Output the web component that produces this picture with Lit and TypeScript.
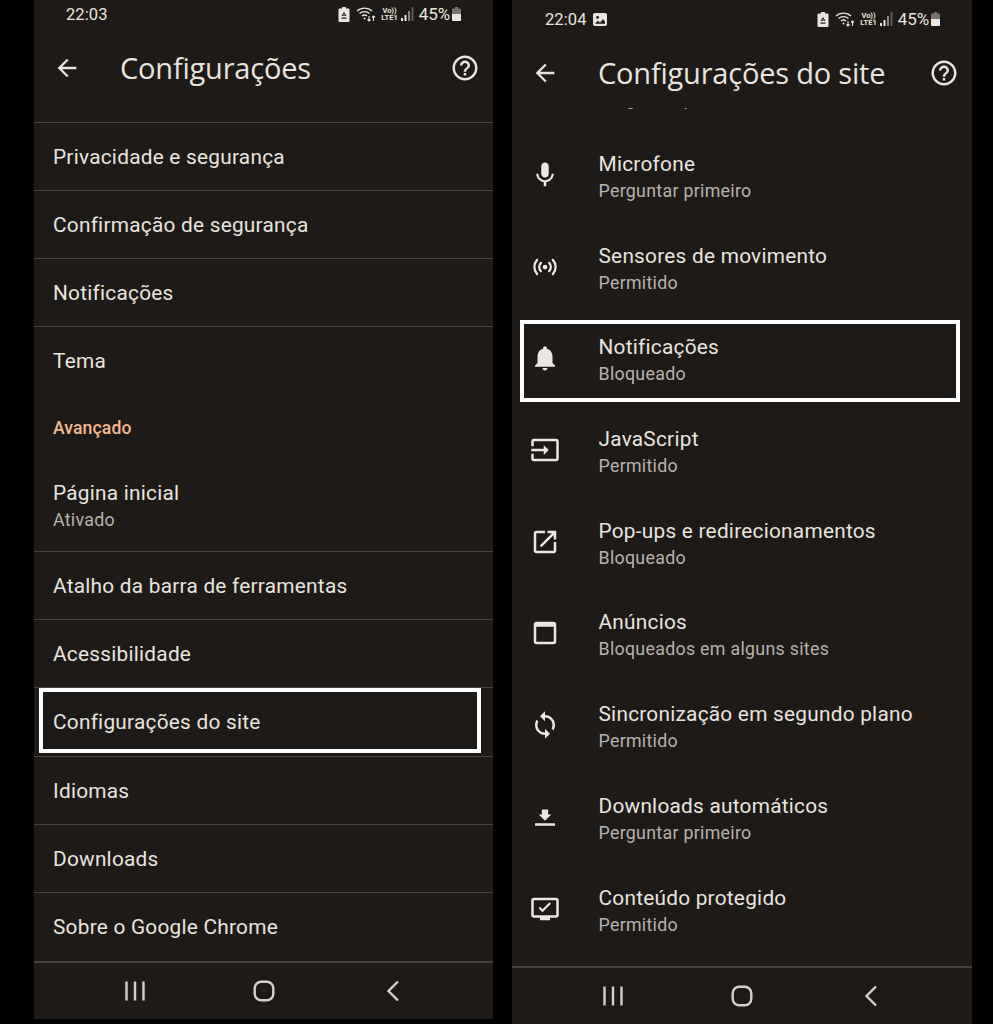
import { LitElement, html, css, svg } from "lit";
import { customElement, property } from "lit/decorators.js";

const ICONS: Record<string, any> = {
  mic: svg`<path d="M12 14c1.66 0 2.99-1.34 2.99-3L15 5c0-1.66-1.34-3-3-3S9 3.34 9 5v6c0 1.66 1.34 3 3 3zm5.3-3c0 3-2.54 5.1-5.3 5.1S6.7 14 6.7 11H5c0 3.41 2.72 6.23 6 6.72V21h2v-3.28c3.28-.48 6-3.3 6-6.72h-1.7z"/>`,
  sensors: svg`<circle cx="12" cy="12" r="1.9"/><path fill="none" stroke="currentColor" stroke-width="1.8" stroke-linecap="round" d="M8.700 8.700a4.700 4.700 0 0 0 0 6.600M15.300 8.700a4.700 4.700 0 0 1 0 6.600M5.700 6.300a8.500 8.500 0 0 0 0 11.400M18.300 6.300a8.500 8.500 0 0 1 0 11.400"/>`,
  bell: svg`<path d="M12 22c1.1 0 2-.9 2-2h-4c0 1.1.89 2 2 2zm6-6v-5c0-3.07-1.64-5.64-4.5-6.32V4c0-.83-.67-1.5-1.5-1.5s-1.5.67-1.5 1.5v.68C7.63 5.36 6 7.92 6 11v5l-2 2v1h16v-1l-2-2z"/>`,
  input: svg`<path d="M21 3.01H3c-1.1 0-2 .9-2 2V9h2V4.99h18v14.03H3V15H1v4.01c0 1.1.9 1.98 2 1.98h18c1.1 0 2-.88 2-1.98v-14c0-1.11-.9-2-2-2zM11 16l4-4-4-4v3H1v2h10v3z"/>`,
  open: svg`<path d="M19 19H5V5h7V3H5c-1.11 0-2 .9-2 2v14c0 1.1.89 2 2 2h14c1.1 0 2-.9 2-2v-7h-2v7zM14 3v2h3.59l-9.83 9.83 1.41 1.41L19 6.41V10h2V3h-7z"/>`,
  web: svg`<path d="M19 3H5c-1.1 0-2 .9-2 2v14c0 1.1.9 2 2 2h14c1.1 0 2-.9 2-2V5c0-1.1-.9-2-2-2zm0 16H5V7h14v12z"/>`,
  sync: svg`<path d="M12 4V1L8 5l4 4V6c3.31 0 6 2.69 6 6 0 1.01-.25 1.97-.7 2.8l1.46 1.46C19.54 15.03 20 13.57 20 12c0-4.42-3.58-8-8-8zm0 14c-3.31 0-6-2.69-6-6 0-1.01.25-1.97.7-2.8L5.24 7.74C4.46 8.97 4 10.43 4 12c0 4.42 3.58 8 8 8v3l4-4-4-4v3z"/>`,
  download: svg`<path d="M9.500 6h5v4H17l-5 5-5-5h2.500zM4 17h16v2H4z"/>`,
  protected: svg`<path d="M21 3H3c-1.1 0-2 .9-2 2v12c0 1.1.9 2 2 2h5v2h8v-2h5c1.1 0 2-.9 2-2V5c0-1.1-.9-2-2-2zm0 14H3V5h18v12z"/><path d="M10 14.600l-3.200-3.200 1.200-1.200 2 2 5.600-5.600 1.200 1.200z"/>`,
};

const BACK = svg`<path d="M20 11H7.83l5.59-5.59L12 4l-8 8 8 8 1.41-1.41L7.83 13H20v-2z"/>`;
const HELP = svg`<path d="M11 18h2v-2h-2v2zm1-16C6.48 2 2 6.48 2 12s4.48 10 10 10 10-4.48 10-10S17.52 2 12 2zm0 18c-4.41 0-8-3.59-8-8s3.59-8 8-8 8 3.59 8 8-3.59 8-8 8zm0-14c-2.21 0-4 1.79-4 4h2c0-1.1.9-2 2-2s2 .9 2 2c0 2-3 1.75-3 5h2c0-2.25 3-2.5 3-5 0-2.21-1.79-4-4-4z"/>`;

@customElement("status-bar")
class StatusBar extends LitElement {
  @property() time = "";
  @property({ type: Boolean }) picture = false;
  static styles = css`
    :host { display: flex; align-items: center; color: #e9e4df; font-family: Roboto, "Liberation Sans", sans-serif; padding: 0 32px; height: 100%; }
    .time { font-size: 16.500px; letter-spacing: 0.1px; }
    .pic { margin-left: 6px; display: block; }
    .right { margin-left: auto; display: flex; align-items: center; }
    .pct { font-size: 17px; margin-left: 5px; letter-spacing: -0.1px; }
    .lte { font-size: 7.500px; line-height: 7.500px; font-weight: 700; text-align: center; margin-left: 5px; }
    svg { display: block; }
  `;
  render() {
    return html`
      <span class="time">${this.time}</span>
      ${this.picture ? html`<svg class="pic" width="14" height="13" viewBox="0 0 14 13"><rect width="14" height="13" rx="2" fill="#e9e4df"/><circle cx="4.500" cy="4.400" r="1.400" fill="#1e1a18"/><path d="M2 10.800l3-3 2 2 3-3.500 2 2.500v2z" fill="#1e1a18"/></svg>` : ""}
      <div class="right">
        <svg width="12" height="16" viewBox="0 0 12 16"><path d="M4 1h4v1.500h2.500a1 1 0 0 1 1 1V15a1 1 0 0 1-1 1h-9a1 1 0 0 1-1-1V3.500a1 1 0 0 1 1-1H4z" fill="#e9e4df"/><path d="M6 6l2.500 4H3.500zM6 8l1 1.600H5z" fill="#1e1a18" fill-rule="evenodd"/><path d="M3.500 11.500h5v1.200h-5z" fill="#1e1a18"/></svg>
        <svg style="margin-left:6px" width="20" height="18" viewBox="0 0 20 18" fill="none" stroke="#e9e4df" stroke-width="1.300"><path d="M1 6a11 11 0 0 1 15 0M3.500 8.500a7.500 7.500 0 0 1 10 0M6 11a4 4 0 0 1 5 0"/><circle cx="8.500" cy="13.500" r="1" fill="#e9e4df" stroke="none"/><path d="M13 11v5M11.500 14.500l1.500 1.500 1.500-1.500M17.500 16v-5M16 12.500l1.500-1.500 1.500 1.500" stroke-width="1.100"/></svg>
        <div class="lte">Vo))<br />LTE1</div>
        <svg style="margin-left:3px" width="13" height="14" viewBox="0 0 13 14"><rect x="0" y="11" width="2" height="3" fill="#e9e4df"/><rect x="3.500" y="8" width="2" height="6" fill="#e9e4df"/><rect x="7" y="4" width="2" height="10" fill="#8a8580"/><rect x="10.500" y="0" width="2" height="14" fill="#5e5a56"/></svg>
        <span class="pct">45%</span>
        <svg style="margin-left:2px" width="9" height="14" viewBox="0 0 9 14"><path d="M3 0h3v1.500h2a1 1 0 0 1 1 1V13a1 1 0 0 1-1 1H1a1 1 0 0 1-1-1V2.500a1 1 0 0 1 1-1h2z" fill="#77726d"/><path d="M0 7h9v6a1 1 0 0 1-1 1H1a1 1 0 0 1-1-1z" fill="#ece7e2"/></svg>
      </div>
    `;
  }
}

@customElement("app-bar")
class AppBar extends LitElement {
  @property() heading = "";
  static styles = css`
    :host { display: flex; align-items: center; padding: 0 13px 0 19px; color: #e9e4df; }
    h1 { margin: 0 0 0 30px; font: 400 29px "Open Sans", Roboto, sans-serif; letter-spacing: -0.2px; flex: 1; white-space: nowrap; position: relative; top: -1px; }
    svg { fill: currentColor; display: block; }
  `;
  render() {
    return html`
      <svg width="28" height="28" viewBox="0 0 24 24" style="margin-right:9px">${BACK}</svg>
      <h1>${this.heading}</h1>
      <svg width="30" height="30" viewBox="0 0 24 24">${HELP}</svg>
    `;
  }
}

@customElement("nav-bar")
class NavBar extends LitElement {
  static styles = css`
    :host { display: flex; justify-content: center; align-items: center; color: #d6d1cc; border-top: 2px solid #46423e; box-sizing: border-box; }
    .slot { width: 129px; display: flex; justify-content: center; }
    svg { display: block; fill: none; stroke: currentColor; stroke-width: 2.400; }
  `;
  render() {
    return html`
      <div class="slot"><svg width="22" height="22" viewBox="0 0 22 22"><path d="M2.500 1.500v19M11 1.500v19M19.500 1.500v19" /></svg></div>
      <div class="slot"><svg width="22" height="22" viewBox="0 0 22 22"><rect x="1.700" y="1.700" width="18.600" height="18.600" rx="6.500" /></svg></div>
      <div class="slot"><svg width="22" height="22" viewBox="0 0 22 22"><path d="M16 1.500L6.500 11l9.500 9.500" /></svg></div>
    `;
  }
}

const LEFT_ROWS: { t: string; s?: string; section?: boolean; hl?: boolean }[] = [
  { t: "Privacidade e segurança" },
  { t: "Confirmação de segurança" },
  { t: "Notificações" },
  { t: "Tema" },
  { t: "Avançado", section: true },
  { t: "Página inicial", s: "Ativado" },
  { t: "Atalho da barra de ferramentas" },
  { t: "Acessibilidade" },
  { t: "Configurações do site", hl: true },
  { t: "Idiomas" },
  { t: "Downloads" },
  { t: "Sobre o Google Chrome" },
];

const RIGHT_ROWS: { i?: string; t: string; s: string; hl?: boolean }[] = [
  { i: "mic", t: "Microfone", s: "Perguntar primeiro" },
  { i: "sensors", t: "Sensores de movimento", s: "Permitido" },
  { i: "bell", t: "Notificações", s: "Bloqueado", hl: true },
  { i: "input", t: "JavaScript", s: "Permitido" },
  { i: "open", t: "Pop-ups e redirecionamentos", s: "Bloqueado" },
  { i: "web", t: "Anúncios", s: "Bloqueados em alguns sites" },
  { i: "sync", t: "Sincronização em segundo plano", s: "Permitido" },
  { i: "download", t: "Downloads automáticos", s: "Perguntar primeiro" },
  { i: "protected", t: "Conteúdo protegido", s: "Permitido" },
];

@customElement("app-root")
class AppRoot extends LitElement {
  static styles = css`
    :host { display: flex; background: #000; height: 1024px; width: 993px; overflow: hidden; padding-left: 34px; gap: 19px; box-sizing: border-box; font-family: Roboto, "Liberation Sans", sans-serif; color: #e9e4df; }
    .phone { background: #1e1a18; display: flex; flex-direction: column; overflow: hidden; }
    .left { width: 459px; height: 1019px; }
    .right { width: 460px; height: 1024px; }
    .left status-bar { height: 28px; flex: none; }
    .left app-bar { height: 80px; flex: none; }
    .left .spacer { height: 13.500px; flex: none; }
    .right status-bar { height: 38px; flex: none; padding-left: 33px; }
    .right app-bar { height: 70px; flex: none; margin-bottom: -3px; position: relative; z-index: 1; background: #1e1a18; }
    .llist { flex: 1; }
    .lrow { height: 68.200px; box-sizing: border-box; border-top: 1.500px solid #4a443d; display: flex; flex-direction: column; justify-content: center; padding: 2px 0 0 19px; position: relative; }
    .lrow.section { border-top: none; color: #f2b98d; font-weight: 500; padding-top: 1px; }
    .lrow.tall { height: 88.500px; border-top: none; padding-top: 0; }
    .t { font-size: 20.800px; line-height: 27px; letter-spacing: 0.25px; white-space: nowrap; }
    .section .t { font-size: 17.600px; letter-spacing: 0.1px; }
    .s { font-size: 17.800px; line-height: 26px; color: #b8b2ad; letter-spacing: 0.3px; white-space: nowrap; }
    .mark { position: absolute; border: 4px solid #fff; box-sizing: border-box; pointer-events: none; }
    .lrow .mark { top: 0; bottom: 3px; left: 5px; right: 12px; }
    .scroller { flex: 1; overflow: hidden; min-height: 0; }
    .rrow { height: 91.700px; box-sizing: border-box; display: flex; align-items: center; padding-left: 18px; position: relative; }
    .rrow:first-child { margin-top: -64px; }
    .rrow svg { width: 30px; height: 30px; fill: currentColor; flex: none; margin: 0 38.500px 7px 0; color: #ece7e2; }
    .rrow .txt { margin-top: -2px; }
    .rrow .mark { top: 4px; bottom: 6px; left: 7.500px; right: 12px; }
    .nb-l { height: 58px; flex: none; }
    .nb-r { height: 58px; flex: none; }
  `;
  render() {
    return html`
      <section class="phone left">
        <status-bar time="22:03"></status-bar>
        <app-bar heading="Configurações"></app-bar>
        <div class="spacer"></div>
        <div class="llist">
          ${LEFT_ROWS.map(
            (r) => html`<div class="lrow ${r.section ? "section" : ""} ${r.s ? "tall" : ""}">
              <div class="t">${r.t}</div>
              ${r.s ? html`<div class="s">${r.s}</div>` : ""}
              ${r.hl ? html`<div class="mark"></div>` : ""}
            </div>`
          )}
        </div>
        <nav-bar class="nb-l"></nav-bar>
      </section>
      <section class="phone right">
        <status-bar time="22:04" picture></status-bar>
        <app-bar heading="Configurações do site"></app-bar>
        <div class="scroller">
          <div class="rrow"><svg viewBox="0 0 24 24"></svg><div class="txt"><div class="t">Câmera</div><div class="s">Perguntar primeiro</div></div></div>
          ${RIGHT_ROWS.map(
            (r) => html`<div class="rrow">
              <svg viewBox="0 0 24 24">${ICONS[r.i!]}</svg>
              <div class="txt"><div class="t">${r.t}</div><div class="s">${r.s}</div></div>
              ${r.hl ? html`<div class="mark"></div>` : ""}
            </div>`
          )}
        </div>
        <nav-bar class="nb-r"></nav-bar>
      </section>
    `;
  }
}
